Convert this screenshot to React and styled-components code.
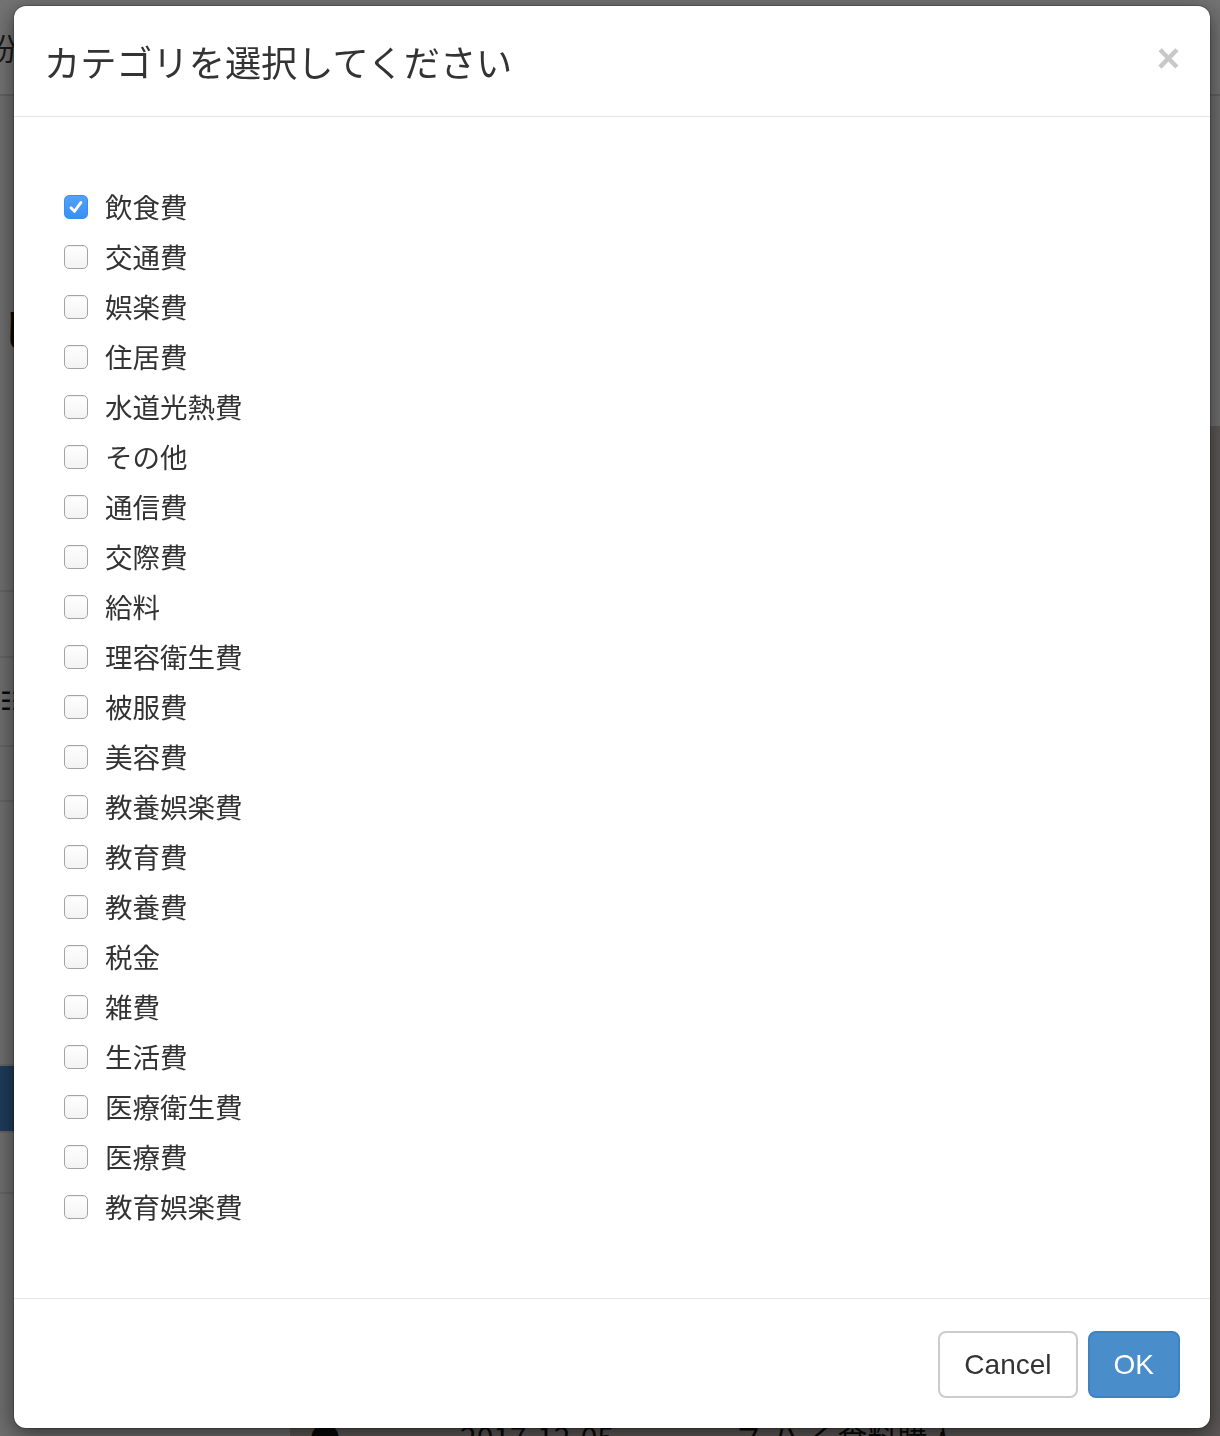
import React, { useState } from "react";
import styled, { createGlobalStyle } from "styled-components";

const GlobalStyle = createGlobalStyle`
  html, body { margin: 0; padding: 0; }
  body {
    font-family: "Liberation Sans", "Noto Sans CJK JP", sans-serif;
    color: #333;
    overflow: hidden;
  }
`;

/* ---------- underlying page (dimmed by backdrop) ---------- */
const Page = styled.div`
  position: relative;
  width: 1220px;
  height: 1436px;
  background: #dedede;
  display: flex;
  flex-direction: column;
  overflow: hidden;
`;

const TopBar = styled.header`
  height: 94px;
  flex: none;
  background: #e6e6e6;
  border-bottom: 2px solid #c4c4c4;
  display: flex;
  align-items: center;
  font-family: "Noto Sans CJK JP", sans-serif;
  font-size: 30px;
  color: #333;
`;

const Layout = styled.div`
  flex: 1;
  display: grid;
  grid-template-columns: 290px 1fr;
`;

const Sidebar = styled.aside`
  background: #dcdcdc;
  display: flex;
  flex-direction: column;
`;

const SideHeading = styled.div`
  height: 494px;
  padding-top: 200px;
  box-sizing: border-box;
  font-family: "Noto Sans CJK JP", sans-serif;
  font-size: 44px;
  color: #111;
`;

const SideItem = styled.div`
  box-sizing: border-box;
  height: ${(p) => p.h}px;
  border-top: 2px solid #c8c8c8;
  background: ${(p) => (p.active ? "#3d76b6" : "transparent")};
  display: flex;
  align-items: center;
  font-size: 26px;
  color: #111;
`;

const Main = styled.main`
  display: flex;
  flex-direction: column;
`;

const MainTop = styled.div`
  height: 330px;
  background: #e0e0e0;
`;

const Table = styled.div`
  flex: 1;
  background: #bdb1b1;
  display: flex;
  flex-direction: column;
  justify-content: flex-end;
`;

const TableRow = styled.div`
  height: 8px;
  display: flex;
  align-items: flex-start;
  gap: 120px;
  padding-left: 20px;
  font-size: 30px;
  line-height: 16px;
  color: #111;
  overflow: hidden;
  font-family: "Noto Sans CJK JP", sans-serif;
`;

const Backdrop = styled.div`
  position: fixed;
  inset: 0;
  background: rgba(0, 0, 0, 0.5);
`;

/* ---------- modal ---------- */
const Modal = styled.div`
  position: fixed;
  left: 14px;
  top: 6px;
  width: 1196px;
  background: #fff;
  border-radius: 12px;
  box-shadow: 0 6px 22px rgba(0, 0, 0, 0.55), 0 0 0 1px rgba(0, 0, 0, 0.2);
  display: flex;
  flex-direction: column;
  overflow: hidden;
`;

const Header = styled.div`
  display: flex;
  align-items: center;
  justify-content: space-between;
  padding: 30px 30px 30px 30px;
  border-bottom: 1px solid #e5e5e5;
`;

const Title = styled.h4`
  margin: 0;
  font-family: "Noto Sans CJK JP", sans-serif;
  font-weight: 400;
  font-size: 36.2px;
  line-height: 50px;
  color: #333;
`;

const Close = styled.button`
  border: 0;
  background: transparent;
  padding: 0;
  margin-top: -6px;
  font-family: "Liberation Sans", sans-serif;
  font-weight: 700;
  font-size: 40px;
  line-height: 40px;
  color: #c8c8c8;
  cursor: pointer;
`;

const Body = styled.div`
  padding: 65px 30px 66px 50px;
  display: flex;
  flex-direction: column;
`;

const Row = styled.label`
  height: 50px;
  display: flex;
  align-items: center;
  gap: 17px;
  cursor: pointer;
`;

const Box = styled.span`
  width: 24px;
  height: 24px;
  box-sizing: border-box;
  border-radius: 5px;
  flex: none;
  display: flex;
  align-items: center;
  justify-content: center;
  border: 1px solid ${(p) => (p.checked ? "#3a8ef0" : "#a4a4a4")};
  background: ${(p) =>
    p.checked ? "linear-gradient(#52a2fb, #3a8ef5)" : "linear-gradient(#fff, #f3f3f3)"};
  box-shadow: ${(p) => (p.checked ? "none" : "inset 0 1px 1px rgba(0,0,0,0.06)")};
`;

const LabelText = styled.span`
  font-family: "Noto Sans CJK JP", sans-serif;
  font-size: 27.5px;
  line-height: 50px;
  color: #333;
  margin-top: -2px;
`;

const Footer = styled.div`
  border-top: 1px solid #e5e5e5;
  padding: 32px 30px 30px;
  display: flex;
  justify-content: flex-end;
  gap: 10px;
`;

const Button = styled.button`
  box-sizing: border-box;
  height: 67px;
  padding: 0 24px;
  border-radius: 8px;
  font-family: "Liberation Sans", sans-serif;
  font-size: 28px;
  border: 2px solid ${(p) => (p.primary ? "#3f82c2" : "#cccccc")};
  background: ${(p) => (p.primary ? "#4a8dcb" : "#fff")};
  color: ${(p) => (p.primary ? "#fff" : "#333")};
  cursor: pointer;
`;

const categories = [
  "飲食費",
  "交通費",
  "娯楽費",
  "住居費",
  "水道光熱費",
  "その他",
  "通信費",
  "交際費",
  "給料",
  "理容衛生費",
  "被服費",
  "美容費",
  "教養娯楽費",
  "教育費",
  "教養費",
  "税金",
  "雑費",
  "生活費",
  "医療衛生費",
  "医療費",
  "教育娯楽費",
];

function Check() {
  return (
    <svg width="20" height="20" viewBox="0 0 20 20" fill="none">
      <path d="M5 10.8 L8.4 14.4 L15 5.4" stroke="#fff" strokeWidth="2.8" strokeLinecap="round" strokeLinejoin="round" />
    </svg>
  );
}

export default function App() {
  const [checked, setChecked] = useState({ 飲食費: true });
  return (
    <>
      <GlobalStyle />
      <Page>
        <TopBar>
          <span style={{ marginLeft: -14 }}>紛</span>
        </TopBar>
        <Layout>
          <Sidebar>
            <SideHeading>し</SideHeading>
            <SideItem h={66} />
            <SideItem h={89}>☷</SideItem>
            <SideItem h={55} />
            <SideItem h={264} />
            <SideItem h={67} active />
            <SideItem h={61} />
            <SideItem h={80} />
          </Sidebar>
          <Main>
            <MainTop />
            <Table>
              <TableRow>
                <span>●</span>
                <span>2017-12-05</span>
                <span>ス ハ く食料購入</span>
              </TableRow>
            </Table>
          </Main>
        </Layout>
      </Page>
      <Backdrop />
      <Modal role="dialog">
        <Header>
          <Title>カテゴリを選択してください</Title>
          <Close aria-label="Close">×</Close>
        </Header>
        <Body>
          {categories.map((c) => (
            <Row key={c} onClick={() => setChecked((s) => ({ ...s, [c]: !s[c] }))}>
              <Box checked={!!checked[c]}>{checked[c] && <Check />}</Box>
              <LabelText>{c}</LabelText>
            </Row>
          ))}
        </Body>
        <Footer>
          <Button>Cancel</Button>
          <Button primary>OK</Button>
        </Footer>
      </Modal>
    </>
  );
}
